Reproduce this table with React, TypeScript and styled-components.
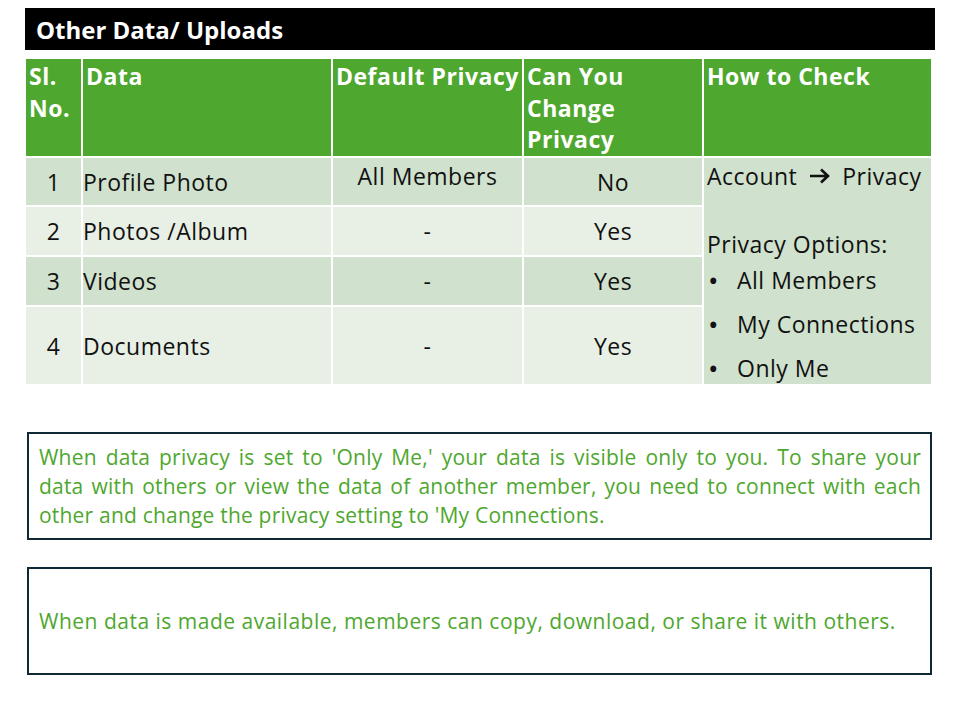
import styled, { createGlobalStyle } from 'styled-components';

const GlobalStyle = createGlobalStyle`
  body {
    margin: 0;
    background: #ffffff;
    font-family: 'Open Sans', 'Liberation Sans', sans-serif;
  }
`;

const rows = [
  { no: '1', data: 'Profile Photo', privacy: 'All Members', change: 'No', shade: 'dark' },
  { no: '2', data: 'Photos /Album', privacy: '-', change: 'Yes', shade: 'light' },
  { no: '3', data: 'Videos', privacy: '-', change: 'Yes', shade: 'dark' },
  { no: '4', data: 'Documents', privacy: '-', change: 'Yes', shade: 'light' },
];

const options = ['All Members', 'My Connections', 'Only Me'];

const privacyNote = [
  "When data privacy is set to 'Only Me,' your data is visible only to you. To share your",
  'data with others or view the data of another member, you need to connect with each',
  "other and change the privacy setting to 'My Connections.",
];

const ArrowIcon = () => (
  <svg width='24' height='18' viewBox='0 0 24 18'>
    <path d='M2 9 H20 M13 2.5 L20 9 L13 15.5' fill='none' stroke='#111' strokeWidth='2.6' />
  </svg>
);

const App = () => {
  return (
    <Page>
      <GlobalStyle />
      <TitleBar>Other Data/ Uploads</TitleBar>
      <Table>
        <HeadCell>Sl.<br />No.</HeadCell>
        <HeadCell>Data</HeadCell>
        <HeadCell>Default Privacy</HeadCell>
        <HeadCell>Can You<br />Change<br />Privacy</HeadCell>
        <HeadCell>How to Check</HeadCell>
        {rows.map((row, i) => (
          <Row key={row.no} $row={i + 2}>
            <Cell $shade={row.shade} $align='center'>{row.no}</Cell>
            <Cell $shade={row.shade}>{row.data}</Cell>
            <Cell $shade={row.shade} $align='center' $top={i === 0}>{row.privacy}</Cell>
            <Cell $shade={row.shade} $align='center'>{row.change}</Cell>
          </Row>
        ))}
        <CheckCell>
          <CheckLine>
            Account <ArrowIcon /> Privacy
          </CheckLine>
          <OptionsTitle>Privacy Options:</OptionsTitle>
          <OptionList>
            {options.map((o) => (
              <OptionItem key={o}>
                <Bullet>•</Bullet>
                {o}
              </OptionItem>
            ))}
          </OptionList>
        </CheckCell>
      </Table>
      <NoteBox>
        <NoteText $spacing={0.2}>
          {privacyNote.map((line, i) => (
            <NoteLine key={i} $last={i === privacyNote.length - 1}>
              {line}
            </NoteLine>
          ))}
        </NoteText>
      </NoteBox>
      <NoteBox $gap={27}>
        <NoteText $spacing={0.5}>
          <NoteLine $last>
            When data is made available, members can copy, download, or share it with others.
          </NoteLine>
        </NoteText>
      </NoteBox>
    </Page>
  );
};

export default App;

const Page = styled.div`
  display: flex;
  flex-direction: column;
  width: 910px;
  padding: 8px 0 0 25px;
`;

const TitleBar = styled.div`
  height: 42px;
  display: flex;
  align-items: center;
  padding-left: 11px;
  background: #000000;
  color: #ffffff;
  font-size: 24px;
  font-weight: 700;
`;

const Table = styled.div`
  display: grid;
  grid-template-columns: 55px 248px 189px 178px 227px;
  grid-template-rows: 97px 47px 48px 48px 77px;
  gap: 2px;
  width: 905px;
  margin: 9px 0 0 1px;
  background: #ffffff;
`;

const HeadCell = styled.div`
  background: #4ea72e;
  color: #ffffff;
  font-size: 23px;
  font-weight: 700;
  line-height: 31.5px;
  padding: 2px 0 0 3px;
  letter-spacing: 0.5px;
  white-space: nowrap;
`;

const Row = styled.div<{ $row: number }>`
  display: contents;
  & > * {
    grid-row: ${(p) => p.$row};
  }
`;

const Cell = styled.div<{ $shade: string; $align?: string; $top?: boolean }>`
  display: flex;
  align-items: ${(p) => (p.$top ? 'flex-start' : 'center')};
  justify-content: ${(p) => (p.$align === 'center' ? 'center' : 'flex-start')};
  padding: ${(p) => (p.$top ? '4px 0 0 0' : '0')};
  background: ${(p) => (p.$shade === 'dark' ? '#d0e1cd' : '#e8f0e6')};
  color: #111111;
  font-size: 23px;
  line-height: 28px;
  letter-spacing: 0.5px;
`;

const CheckCell = styled.div`
  grid-column: 5;
  grid-row: 2 / span 4;
  display: flex;
  flex-direction: column;
  padding: 4px 0 0 3px;
  background: #d0e1cd;
  color: #111111;
  font-size: 23px;
  line-height: 28px;
  letter-spacing: 0.5px;
  white-space: nowrap;
`;

const CheckLine = styled.div`
  display: flex;
  align-items: center;
  gap: 4px;
  white-space: pre;
`;

const OptionsTitle = styled.div`
  margin-top: 40px;
`;

const OptionList = styled.ul`
  list-style: none;
  margin: 8px 0 0;
  padding: 0;
  display: flex;
  flex-direction: column;
  gap: 16px;
`;

const OptionItem = styled.li`
  display: flex;
  align-items: center;
`;

const Bullet = styled.span`
  width: 29px;
  padding-left: 1px;
  font-size: 28px;
`;

const NoteBox = styled.div<{ $gap?: number }>`
  display: flex;
  align-items: center;
  height: 108px;
  box-sizing: border-box;
  width: 905px;
  margin: ${(p) => p.$gap ?? 48}px 0 0 2px;
  padding: 0 9px 0 10px;
  border: 2px solid #0e2836;
`;

const NoteText = styled.div<{ $spacing?: number }>`
  flex: 1;
  color: #4ea72e;
  font-size: 21px;
  line-height: 29px;
  letter-spacing: ${(p) => p.$spacing ?? 0}px;
`;

const NoteLine = styled.span<{ $last?: boolean }>`
  display: block;
  white-space: nowrap;
  text-align: ${(p) => (p.$last ? 'left' : 'justify')};
  text-align-last: ${(p) => (p.$last ? 'left' : 'justify')};
`;
